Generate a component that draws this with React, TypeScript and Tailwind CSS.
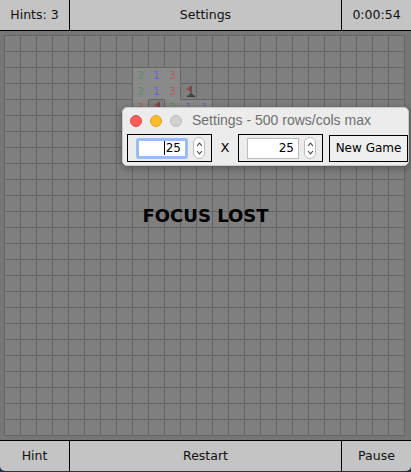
import React from "react";

type Cell = { n?: number; flag?: boolean; open?: boolean };

const SIZE = 25;

const opened: Record<string, number> = {
  "2-8": 2, "2-9": 1, "2-10": 3,
  "3-8": 2, "3-9": 1, "3-10": 3,
  "4-8": 3, "4-10": 2, "4-11": 1, "4-12": 1,
};
const flags = new Set(["3-11", "4-9"]);

const numColor: Record<number, string> = {
  1: "text-[#6767b8]",
  2: "text-[#5e8e5e]",
  3: "text-[#b25e5e]",
};

function getCell(r: number, c: number): Cell {
  const k = `${r}-${c}`;
  if (k in opened) return { open: true, n: opened[k] };
  if (flags.has(k)) return { flag: true };
  return {};
}

function Flag() {
  return (
    <svg width="15" height="15" viewBox="0 0 15 15">
      <polygon points="5,5 10,2 10,8" fill="#a24848" />
      <rect x="9.5" y="2" width="1" height="9" fill="#3a3a3a" />
      <rect x="8" y="10" width="4" height="1.5" fill="#3a3a3a" />
      <rect x="6" y="11.5" width="8" height="1.5" fill="#3a3a3a" />
    </svg>
  );
}

function Board() {
  const rows = [];
  for (let r = 0; r < SIZE; r++) {
    for (let c = 0; c < SIZE; c++) {
      const cell = getCell(r, c);
      const rightOpen = cell.open && getCell(r, c + 1).open;
      const downOpen = cell.open && getCell(r + 1, c).open;
      rows.push(
        <div
          key={`${r}-${c}`}
          className={`w-[16px] h-[16px] border-r border-b flex items-center justify-center text-[11px] leading-none ${
            cell.open ? "bg-[#8a8a8a]" : "bg-[#7f7f7f]"
          } ${rightOpen ? "border-r-[#8a8a8a]" : "border-r-[#656565]"} ${
            downOpen ? "border-b-[#8a8a8a]" : "border-b-[#656565]"
          }`}
        >
          {cell.n && <span className={numColor[cell.n]}>{cell.n}</span>}
          {cell.flag && <Flag />}
        </div>
      );
    }
  }
  return (
    <div className="grid grid-cols-[repeat(25,16px)] border-l border-t border-[#656565] w-[401px]">
      {rows}
    </div>
  );
}

function Spinner() {
  return (
    <div className="w-[12px] h-[22px] rounded-full bg-white border border-[#bdbdbd] flex flex-col items-center justify-center gap-[3px]">
      <svg width="7" height="5" viewBox="0 0 7 5">
        <path d="M1 4 L3.5 1.2 L6 4" fill="none" stroke="#444" strokeWidth="1.1" />
      </svg>
      <svg width="7" height="5" viewBox="0 0 7 5">
        <path d="M1 1 L3.5 3.8 L6 1" fill="none" stroke="#444" strokeWidth="1.1" />
      </svg>
    </div>
  );
}

function NumberField({ focused }: { focused?: boolean }) {
  return (
    <div className="w-[85px] h-[28px] border border-black flex items-center pl-[8px] gap-[5px]">
      <div
        className={`w-[52px] h-[21px] bg-white flex items-center justify-end pr-[4px] text-[12px] text-black ${
          focused ? "border-[3px] border-[#98bdf0] rounded-[3px]" : "border border-[#bcbcbc]"
        }`}
      >
        {focused && <span className="w-px h-[14px] bg-black mr-[1px]" />}
        <span>25</span>
      </div>
      <Spinner />
    </div>
  );
}

function SettingsDialog() {
  return (
    <div className="absolute left-[122px] top-[107px] w-[287px] h-[59px] rounded-[5px] bg-[#ececec] shadow-[0_2px_8px_rgba(0,0,0,0.35)] border border-[#c8c8c8]">
      <div className="h-[25px] flex items-center pl-[7px] relative">
        <div className="flex gap-[8px]">
          <span className="w-[12px] h-[12px] rounded-full bg-[#fc5f57] border border-[#de4a43]" />
          <span className="w-[12px] h-[12px] rounded-full bg-[#fdbb2e] border border-[#dea123]" />
          <span className="w-[12px] h-[12px] rounded-full bg-[#d0d0d0] border border-[#bcbcbc]" />
        </div>
        <span className="ml-[10px] text-[14px] text-[#6f6f6f] font-['Liberation_Sans',sans-serif]">
          Settings - 500 rows/cols max
        </span>
      </div>
      <div className="flex items-center pl-[4px] mt-[1px]">
        <NumberField focused />
        <span className="w-[26px] text-center text-[13px] text-black">X</span>
        <NumberField />
        <div className="ml-[6px] w-[79px] h-[27px] border border-black bg-[#efefef] flex items-center justify-center text-[12px] text-black">
          New Game
        </div>
      </div>
    </div>
  );
}

function BarCell({ w, children, last }: { w: string; children: React.ReactNode; last?: boolean }) {
  return (
    <div className={`${w} h-full flex items-center justify-center ${last ? "" : "border-r border-black"}`}>
      {children}
    </div>
  );
}

export default function App() {
  return (
    <div className="w-[411px] h-[472px] bg-[#243444] font-['DejaVu_Sans',sans-serif] text-[12.5px] text-[#111] relative overflow-hidden">
      <div className="w-[411px] h-[31px] bg-[#c4c4c4] border-b border-black flex">
        <BarCell w="w-[70px]">Hints: 3</BarCell>
        <BarCell w="w-[272px]">Settings</BarCell>
        <BarCell w="flex-1" last>0:00:54</BarCell>
      </div>
      <div className="w-[411px] h-[409px] bg-[#767676] pt-[4px] pl-[4px] relative">
        <Board />
        <div className="absolute left-0 right-0 top-[174px] text-center text-[18px] leading-[22px] font-bold text-black">
          FOCUS LOST
        </div>
      </div>
      <div className="w-[411px] h-[31px] bg-[#c4c4c4] border-t border-black flex rounded-b-[5px]">
        <BarCell w="w-[70px]">Hint</BarCell>
        <BarCell w="w-[272px]">Restart</BarCell>
        <BarCell w="flex-1" last>Pause</BarCell>
      </div>
      <SettingsDialog />
    </div>
  );
}
